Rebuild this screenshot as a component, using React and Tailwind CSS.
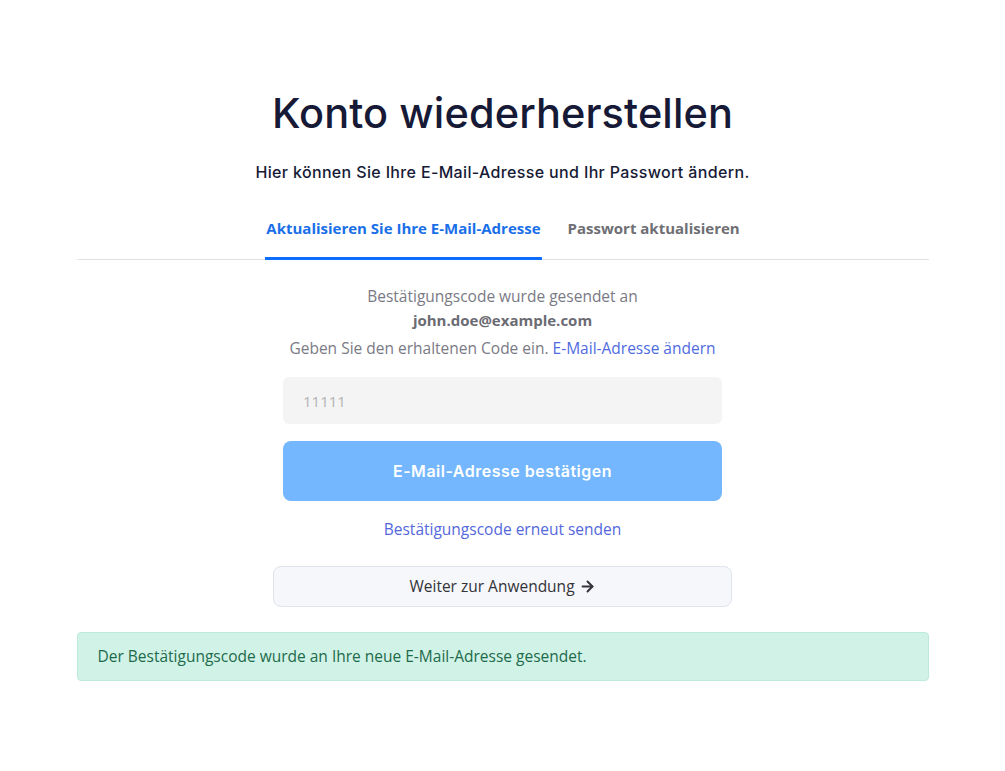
import { ArrowRight } from "lucide-react";

export default function App() {
  return (
    <div className="min-h-screen bg-white font-['Open_Sans','Noto_Sans',sans-serif]">
      <div className="mx-auto w-[852px] pt-[85px]">
        <h1 className="text-center text-[41.5px] leading-[56px] font-medium tracking-[0.1px] text-[#161a36] font-['Inter','Noto_Sans',sans-serif]">
          Konto wiederherstellen
        </h1>
        <p className="mt-[19px] text-center text-[16px] leading-6 font-medium tracking-[0.35px] text-[#161a36] font-['Inter','Noto_Sans',sans-serif]">
          Hier können Sie Ihre E-Mail-Adresse und Ihr Passwort ändern.
        </p>

        <div className="mt-[32px] flex justify-center gap-[26px] border-b border-[#dee2e6]">
          <button className="-mb-px border-b-[3px] border-[#0d6efd] px-px pb-[17px] text-[15px] leading-6 font-bold text-[#1a6fe8]">
            Aktualisieren Sie Ihre E-Mail-Adresse
          </button>
          <button className="-mb-px border-b-[3px] border-transparent pb-[17px] text-[15px] leading-6 font-bold text-[#6e6e73]">
            Passwort aktualisieren
          </button>
        </div>

        <div className="flex flex-col items-center">
          <p className="mt-[24px] text-center text-[15.5px] leading-6 text-[#7a7a85]">
            Bestätigungscode wurde gesendet an
          </p>
          <p className="text-center text-[15px] leading-6 font-bold text-[#6b6b73]">john.doe@example.com</p>
          <p className="mt-[4px] text-center text-[15.5px] leading-6 text-[#7a7a85]">
            Geben Sie den erhaltenen Code ein.{" "}
            <a className="text-[#4f6bdf]">E-Mail-Adresse ändern</a>
          </p>

          <input
            className="mt-[17px] h-[47px] w-[439px] rounded-[6px] bg-[#f4f4f4] px-5 text-[15px] text-[#555] outline-none placeholder:text-[#b3b3b3]"
            placeholder="11111"
          />

          <button className="mt-[17px] h-[60px] w-[439px] rounded-[8px] bg-[#74b7fe] text-[16px] font-semibold tracking-[0.5px] text-white font-['Inter','Noto_Sans',sans-serif]">
            E-Mail-Adresse bestätigen
          </button>

          <a className="mt-[16px] text-[15.5px] leading-6 text-[#5468dc]">Bestätigungscode erneut senden</a>

          <button className="mt-[25px] flex h-[41px] w-[459px] items-center justify-center gap-1 rounded-[8px] border border-[#e1e3ec] bg-[#f6f7fb] text-[15.5px] text-[#333338]">
            Weiter zur Anwendung
            <ArrowRight size={17} strokeWidth={2.75} />
          </button>
        </div>

        <div className="mt-[25px] flex h-[49px] items-center rounded-[4px] border border-[#bdebd9] bg-[#d1f2e6] pl-[20px] text-[15.5px] text-[#1d6b4c]">
          Der Bestätigungscode wurde an Ihre neue E-Mail-Adresse gesendet.
        </div>
      </div>
    </div>
  );
}
